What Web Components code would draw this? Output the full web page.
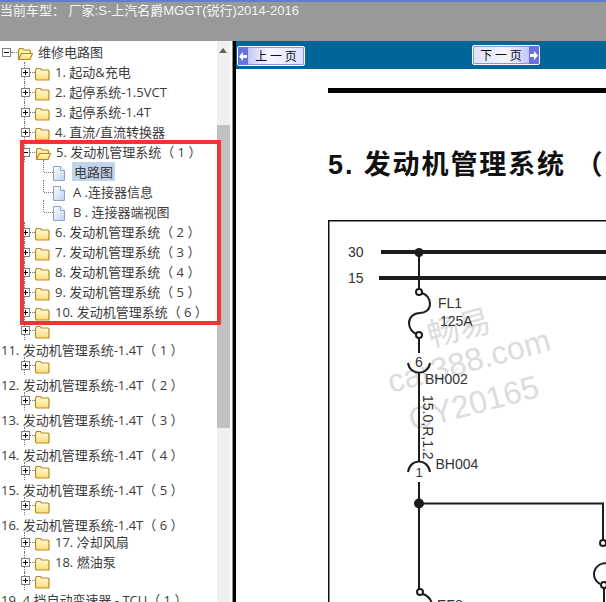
<!DOCTYPE html>
<html lang="zh">
<head>
<meta charset="utf-8">
<title>维修电路图</title>
<style>
  html, body { margin: 0; height: 100%; overflow: hidden; background: #fff; }
</style>
</head>
<body>
<manual-app>
  <span slot="title">当前车型： 厂家:S-上汽名爵MGGT(锐行)2014-2016</span>
</manual-app>

<script>
const plusBox = `<svg width="9" height="9" viewBox="0 0 9 9"><rect x=".5" y=".5" width="8" height="8" fill="#fff" stroke="#808080"/><path d="M2 4.5h5M4.5 2v5" stroke="#000"/></svg>`;
const minusBox = `<svg width="9" height="9" viewBox="0 0 9 9"><rect x=".5" y=".5" width="8" height="8" fill="#fff" stroke="#808080"/><path d="M2 4.5h5" stroke="#000"/></svg>`;
const closedFolder = `<svg width="15" height="14" viewBox="0 0 15 14"><defs><linearGradient id="f" x1="0" y1="0" x2="0" y2="1"><stop offset="0" stop-color="#fffde2"/><stop offset="1" stop-color="#fcdc72"/></linearGradient></defs><path d="M.5 3.5l1-2h4l1 1.5h6.5l1 1v8l-1 1h-11.500l-1-1z" fill="url(#f)" stroke="#b88a1e" stroke-width="1.200"/><path d="M2 13.500h12.500" stroke="#dccb98"/></svg>`;
const openFolder = `<svg width="16" height="14" viewBox="0 0 16 14"><defs><linearGradient id="o" x1="0" y1="0" x2="0" y2="1"><stop offset="0" stop-color="#fff8d0"/><stop offset="1" stop-color="#fcdc72"/></linearGradient></defs><path d="M1.500 12V3l1-1.500h3.500l1 1.500h6l.5 1.500v2" fill="#fdeeb0" stroke="#b88a1e" stroke-width="1.200"/><path d="M1.500 12.500l3-6h11l-2.500 6z" fill="url(#o)" stroke="#b88a1e" stroke-width="1.200"/></svg>`;
const docIcon = `<svg width="12" height="15" viewBox="0 0 12 15"><defs><linearGradient id="d" x1="0" y1="0" x2="1" y2="1"><stop offset="0" stop-color="#fff"/><stop offset="1" stop-color="#bcd0ee"/></linearGradient></defs><path d="M.5.500h7l4 4v10h-11z" fill="url(#d)" stroke="#8ea3c4"/><path d="M7.500.500v4h4" fill="#fff" stroke="#8ea3c4"/></svg>`;

class TreeRow extends HTMLElement {
  constructor() {
    super();
    this.attachShadow({ mode: "open" });
    const kind = this.getAttribute("kind") || "folder";
    let icons = "";
    if (kind === "root") icons = `<span class="x root">${minusBox}</span><i class="h root-h"></i><span class="ic">${openFolder}</span>`;
    if (kind === "open") icons = `<span class="x">${minusBox}</span><i class="h"></i><span class="ic">${openFolder}</span>`;
    if (kind === "folder") icons = `<span class="x">${plusBox}</span><i class="h"></i><span class="ic">${closedFolder}</span>`;
    if (kind === "leaf") icons = `<i class="h leaf-h"></i><span class="ic">${docIcon}</span>`;
    this.shadowRoot.innerHTML = `
      <style>
        :host {
          align-items: center;
          box-sizing: border-box;
          display: flex;
          height: var(--row, 20px);
          padding-left: 21px;
          position: relative;
          white-space: nowrap;
        }
        :host([kind="root"]) { padding-left: 2px; }
        :host([kind="leaf"]) { padding-left: 44px; }
        :host([kind="text"]) { padding-left: 1px; }
        :host([kind="folder"])::before,
        :host([kind="open"])::before {
          border-left: 1px dotted #777;
          content: "";
          height: 100%;
          left: 24px;
          position: absolute;
          top: 0;
        }
        :host([kind="leaf"])::before {
          border-left: 1px dotted #777;
          content: "";
          height: 60%;
          left: 43px;
          position: absolute;
          top: -2px;
        }
        .x { display: flex; position: relative; }
        .h { border-top: 1px dotted #777; display: block; width: 5px; }
        .root-h { width: 6px; }
        .leaf-h { width: 9px; }
        .ic { display: flex; margin-top: 3px; }
        .t { margin: -2px 0 0 5px; }
        :host([kind="root"]) .t { margin-left: 5px; }
        :host([kind="leaf"]) .t { margin-left: 8px; }
        :host([kind="text"]) .t { margin: 2px 0 0; }
        :host([selected]) .t {
          background: #c2d4ec;
          margin-left: 7px;
          padding: 0 2px;
        }
      </style>
      ${icons}<span class="t"><slot></slot></span>`;
  }
}
customElements.define("tree-row", TreeRow);

class TreePane extends HTMLElement {
  constructor() {
    super();
    this.attachShadow({ mode: "open" });
    const row = (kind, text = "", extra = "") => `<tree-row kind="${kind}" ${extra}>${text}</tree-row>`;
    const wrapped = (text) => row("folder", "", 'style="--row:17.500px"') + row("text", text, 'style="--row:17.500px"');
    this.shadowRoot.innerHTML = `
      <style>
        :host {
          background: #fff;
          color: #3c3c3c;
          display: block;
          flex: none;
          font: 13px "Open Sans", "Noto Sans CJK SC", sans-serif;
          overflow: hidden;
          position: relative;
          width: 232px;
        }
        .rows { padding-top: 1px; }
        .bar {
          background: #f0f0f0;
          bottom: 0;
          position: absolute;
          right: 2px;
          top: 0;
          width: 13px;
        }
        .bar::before {
          border: 4px solid transparent;
          border-bottom: 5px solid #606060;
          border-top: 0;
          content: "";
          left: 2px;
          position: absolute;
          top: 7px;
        }
        .thumb {
          background: #c1c1c1;
          height: 303px;
          margin-top: 84px;
        }
        .mark {
          border: 4px solid #f33333;
          box-sizing: border-box;
          height: 185px;
          left: 20px;
          position: absolute;
          top: 99px;
          width: 201px;
        }
      </style>
      <div class="bar"><div class="thumb"></div></div>
      <div class="rows">
        ${row("root", "维修电路图")}
        ${row("folder", "1. 起动&amp;充电")}
        ${row("folder", "2. 起停系统-1.5VCT")}
        ${row("folder", "3. 起停系统-1.4T")}
        ${row("folder", "4. 直流/直流转换器")}
        ${row("open", "5. 发动机管理系统（ 1 ）")}
        ${row("leaf", "电路图", "selected")}
        ${row("leaf", "A .连接器信息")}
        ${row("leaf", "B . 连接器端视图")}
        ${row("folder", "6. 发动机管理系统（ 2 ）")}
        ${row("folder", "7. 发动机管理系统（ 3 ）")}
        ${row("folder", "8. 发动机管理系统（ 4 ）")}
        ${row("folder", "9. 发动机管理系统（ 5 ）")}
        ${row("folder", "10. 发动机管理系统（ 6 ）")}
        ${wrapped("11. 发动机管理系统-1.4T（ 1 ）")}
        ${wrapped("12. 发动机管理系统-1.4T（ 2 ）")}
        ${wrapped("13. 发动机管理系统-1.4T（ 3 ）")}
        ${wrapped("14. 发动机管理系统-1.4T（ 4 ）")}
        ${wrapped("15. 发动机管理系统-1.4T（ 5 ）")}
        ${wrapped("16. 发动机管理系统-1.4T（ 6 ）")}
        ${row("folder", "17. 冷却风扇")}
        ${row("folder", "18. 燃油泵")}
        ${wrapped("19. 4 挡自动变速器 - TCU（ 1 ）")}
      </div>
      <div class="mark"></div>`;
  }
}
customElements.define("tree-pane", TreePane);

class NavButton extends HTMLElement {
  constructor() {
    super();
    this.attachShadow({ mode: "open" });
    const next = this.getAttribute("dir") === "next";
    const arrow = next
      ? `<svg width="8" height="9" viewBox="0 0 8 9"><path d="M0 3h4V0l4 4.500-4 4.500V6H0z" fill="#fff"/></svg>`
      : `<svg width="8" height="9" viewBox="0 0 8 9"><path d="M8 3H4V0L0 4.500 4 9V6h4z" fill="#fff"/></svg>`;
    this.shadowRoot.innerHTML = `
      <style>
        :host {
          background: linear-gradient(90deg, #aab3f0, #f4f5ff 45%, #dfe2fb);
          border: 1px solid #fff;
          border-radius: 2px;
          box-shadow: inset 0 0 0 1px #8b95d8;
          box-sizing: border-box;
          color: #111;
          display: flex;
          font: 12px "Noto Sans CJK SC", sans-serif;
          height: 20px;
          overflow: hidden;
          width: 68px;
        }
        :host([dir="next"]) {
          background: linear-gradient(90deg, #dfe2fb, #f4f5ff 50%, #aab3f0);
          flex-direction: row-reverse;
        }
        .arrow {
          align-items: center;
          background: #6673dc;
          display: flex;
          flex: none;
          justify-content: center;
          width: 10px;
        }
        .label {
          flex: 1;
          line-height: 17px;
          text-align: center;
        }
      </style>
      <span class="arrow">${arrow}</span><span class="label"><slot></slot></span>`;
  }
}
customElements.define("nav-button", NavButton);

class WiringDiagram extends HTMLElement {
  constructor() {
    super();
    this.attachShadow({ mode: "open" });
    this.shadowRoot.innerHTML = `
      <style>
        :host { display: block; flex: 1; min-height: 0; }
        svg { display: block; }
        text { fill: #333; font: 14px "Liberation Sans", sans-serif; }
        .wm { fill: #dcdcdc; font-size: 32px; }
        .w { fill: none; stroke: #1c1c1c; stroke-width: 2; }
        .bus { stroke-width: 4; }
        .pin { fill: #fff; stroke: #1c1c1c; stroke-width: 2; }
        .dot { fill: #1c1c1c; }
      </style>
      <svg width="278" height="382" viewBox="328 220 278 382">
        <rect x="328.750" y="220.750" width="400" height="500" fill="#fff" stroke="#111" stroke-width="1.500"/>
        <text class="wm" transform="translate(431 347) rotate(-15)" style="font-family:'Noto Sans CJK SC',sans-serif">畅易</text>
        <text class="wm" transform="translate(391 393) rotate(-15)">car388.com</text>
        <text class="wm" transform="translate(412 431) rotate(-15)">CY20165</text>
        <text x="348" y="256.500">30</text>
        <text x="348" y="283">15</text>
        <path class="w bus" d="M381 252H606M379 278H606"/>
        <circle class="dot" cx="419" cy="252.500" r="4.500"/>
        <path class="w" d="M419 252V290M419 338V353M419 373V461M419 482V590M419 503.500H603V540M604 588V602"/>
        <path class="w" d="M421 293C427 294 430 299 430 304C430 310 425 313 420 313C414 313 409 317 409 323C409 329 413 333 417 334"/>
        <circle class="pin" cx="419" cy="292" r="3"/>
        <circle class="pin" cx="419" cy="335" r="3"/>
        <text x="438" y="308">FL1</text>
        <text x="440" y="326">125A</text>
        <text x="415" y="367">6</text>
        <path class="w" d="M408 363C410 376 428 376 430 363"/>
        <text x="425" y="384">BH002</text>
        <text transform="translate(423 395) rotate(90)">15.0,R,1.2</text>
        <path class="w" d="M408 472C410 458 428 458 430 472"/>
        <text x="415.500" y="477" style="font-size:13px">1</text>
        <text x="435.500" y="469">BH004</text>
        <circle class="dot" cx="419" cy="503.500" r="5"/>
        <circle class="pin" cx="603" cy="543" r="3"/>
        <path class="w" d="M607 563.400A11 11 0 0 0 600 584"/>
        <circle class="pin" cx="604" cy="585" r="3"/>
        <circle class="pin" cx="420" cy="592" r="3"/>
        <path class="w" d="M423 594C428 596 431 599 432 604"/>
        <text x="437" y="610">EF8</text>
      </svg>`;
  }
}
customElements.define("wiring-diagram", WiringDiagram);

class ManualPage extends HTMLElement {
  constructor() {
    super();
    this.attachShadow({ mode: "open" });
    this.shadowRoot.innerHTML = `
      <style>
        :host {
          background: #fff;
          display: flex;
          flex: 1;
          flex-direction: column;
          min-width: 0;
          overflow: hidden;
        }
        nav {
          align-items: flex-start;
          background: #006699;
          box-sizing: border-box;
          display: flex;
          flex: none;
          height: 28px;
          padding: 5px 0 0 1px;
        }
        nav nav-button + nav-button { margin: -1px 0 0 167px; }
        .sheet {
          display: flex;
          flex: 1;
          flex-direction: column;
          min-height: 0;
          padding: 19px 0 0 92px;
        }
        .rule { background: #000; flex: none; height: 5px; }
        h1 {
          color: #111;
          flex: none;
          font: bold 27px/40px "Liberation Sans", "Noto Sans CJK SC", sans-serif;
          letter-spacing: 1.900px;
          margin: 52px 0 35px;
          white-space: nowrap;
        }
      </style>
      <nav>
        <nav-button dir="prev">上 一 页</nav-button>
        <nav-button dir="next">下 一 页</nav-button>
      </nav>
      <div class="sheet">
        <div class="rule"></div>
        <h1>5. 发动机管理系统 （1）</h1>
        <wiring-diagram></wiring-diagram>
      </div>`;
  }
}
customElements.define("manual-page", ManualPage);

class ManualApp extends HTMLElement {
  constructor() {
    super();
    this.attachShadow({ mode: "open" });
    this.shadowRoot.innerHTML = `
      <style>
        :host {
          display: flex;
          flex-direction: column;
          height: 100vh;
          overflow: hidden;
        }
        header {
          background: #999;
          border-top: 2px solid #5f7fd0;
          box-sizing: border-box;
          color: #f4f4f4;
          flex: none;
          font: 13px/17px "Liberation Sans", "Noto Sans CJK SC", sans-serif;
          height: 41px;
          white-space: nowrap;
        }
        main { display: flex; flex: 1; min-height: 0; }
        .split {
          background: #000;
          border-left: 1px solid #8c8c8c;
          box-sizing: border-box;
          flex: none;
          width: 4px;
        }
      </style>
      <header><slot name="title"></slot></header>
      <main>
        <tree-pane></tree-pane>
        <div class="split"></div>
        <manual-page></manual-page>
      </main>`;
  }
}
customElements.define("manual-app", ManualApp);
</script>
</body>
</html>
